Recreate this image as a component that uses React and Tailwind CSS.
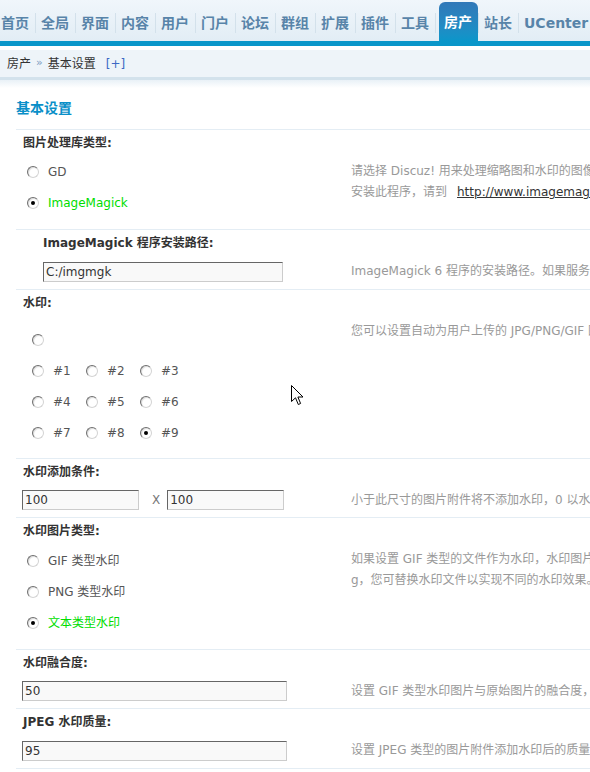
import React from 'react';

const tabs = ['首页', '全局', '界面', '内容', '用户', '门户', '论坛', '群组', '扩展', '插件', '工具', '房产', '站长', 'UCenter'];

const Radio = ({ checked }) => (
  <span className="w-[12px] h-[12px] shrink-0 rounded-full border border-t-[#6f6f6f] border-l-[#6f6f6f] border-r-[#d4d4d4] border-b-[#d4d4d4] bg-white shadow-[inset_1px_1px_1px_rgba(0,0,0,0.15)] flex items-center justify-center">
    {checked && <span className="w-[4px] h-[4px] rounded-full bg-black" />}
  </span>
);

const Option = ({ label, checked }) => (
  <li className="h-[22px] mb-[9px] flex items-center gap-[9px]">
    <Radio checked={checked} />
    <span className={checked ? 'text-[#00dd00]' : 'text-[#555]'}>{label}</span>
  </li>
);

const Input = ({ value, className }) => (
  <input
    readOnly
    value={value}
    className={`h-[20px] border border-t-[#666] border-l-[#666] border-r-[#ccc] border-b-[#ccc] bg-[#f9f9f9] px-[2px] text-[12px] text-[#333] outline-none ${className}`}
  />
);

const Title = ({ children, sub }) => (
  <div className={`h-[26px] border-t border-[#e4edf4] flex items-center font-bold text-[#333] ${sub ? 'pl-[27px]' : 'pl-[7px]'}`}>
    {children}
  </div>
);

const Row = ({ left, children }) => (
  <div className="flex">
    <div className="w-[335px] shrink-0">{left}</div>
    <div className="pt-[6px] leading-[21px] text-[#999] whitespace-nowrap">{children}</div>
  </div>
);

export default function App() {
  return (
    <div className="relative w-[590px] h-[772px] overflow-hidden bg-white text-[12px] font-['DejaVu_Sans','Noto_Sans_CJK_SC',sans-serif]">
      {/* top menu */}
      <div className="h-[41px] bg-linear-to-b from-[#f0f6fb] to-[#e2edf5] flex items-end">
        <div className="flex items-end ml-[-4px]">
          {tabs.map((t) => {
            const active = t === '房产';
            return (
              <React.Fragment key={t}>
                <div
                  className={`h-[39px] pl-[5px] pr-[6px] flex items-center font-bold text-[14px] whitespace-nowrap ${
                    active
                      ? 'ml-[3px] pt-[1px] rounded-t-[6px] bg-linear-to-b from-[#3178b8] to-[#0a96ca] text-white'
                      : 'pt-[3px] text-[#5884a9]'
                  } ${t === 'UCenter' ? 'text-[12px]' : ''}`}
                >
                  {t}
                </div>
                <span className="w-px h-[20px] mb-[8px] bg-[#d3e1eb]" />
              </React.Fragment>
            );
          })}
        </div>
      </div>
      <div className="h-[5px] bg-[#0a96c9]" />
      <div className="h-[4px] bg-white" />

      {/* breadcrumb */}
      <div className="h-[27px] bg-[#eef4f9] flex items-center pl-[7px] text-[#333]">
        <span>房产</span>
        <span className="mx-[5px] text-[#7d9cc2] text-[11px]">»</span>
        <span>基本设置</span>
        <span className="ml-[10px] text-[#3d68c4]">[+]</span>
      </div>
      <div className="h-[3px] bg-[#d3e2ec]" />
      <div className="h-[8px] bg-linear-to-b from-[#e9f1f7] to-white" />

      <div className="ml-[16px]">
        <div className="h-[41px] flex items-end pb-[11px]">
          <h3 className="leading-[20px] text-[14px] font-bold text-[#0a8fc8]">基本设置</h3>
        </div>

        <Title>图片处理库类型:</Title>
        <Row
          left={
            <ul className="pl-[11px] pt-[6px] pb-[6px]">
              <Option label="GD" />
              <Option label="ImageMagick" checked />
            </ul>
          }
        >
          <div>请选择 Discuz! 用来处理缩略图和水印的图像处理库，GD 是最广泛的处理库但是使用的系统资源较多，ImageMagick 速度快系统资源占用少，但需要服务器有执行命令行命令的权限。如果您的服务器有条件</div>
          <div>
            安装此程序，请到<span className="ml-[10px] text-[#333] underline">http://www.imagemagick.org</span> 下载，安装后在下面指定安装的路径
          </div>
        </Row>

        <Title sub>ImageMagick 程序安装路径:</Title>
        <Row
          left={
            <div className="pl-[27px] pt-[7px] pb-[7px]">
              <Input value="C:/imgmgk" className="w-[240px]" />
            </div>
          }
        >
          ImageMagick 6 程序的安装路径。如果服务器的操作系统为 Windows，路径不要使用长文件名
        </Row>

        <Title>水印:</Title>
        <Row
          left={
            <div className="pl-[16px] pt-[14px] pb-[5px]">
              <ul>
                <Option label="" />
              </ul>
              {[['#1', '#2', '#3'], ['#4', '#5', '#6'], ['#7', '#8', '#9']].map((r) => (
                <ul key={r[0]} className="flex">
                  {r.map((n) => (
                    <li key={n} className="w-[54px] h-[22px] mb-[9px] flex items-center gap-[9px]">
                      <Radio checked={n === '#9'} />
                      <span className="text-[#555]">{n}</span>
                    </li>
                  ))}
                </ul>
              ))}
            </div>
          }
        >
          您可以设置自动为用户上传的 JPG/PNG/GIF 图片附件添加水印，请在此选择水印添加的位置(3x3 共 9 个位置可选)。不支持动画 GIF 格式
        </Row>

        <Title>水印添加条件:</Title>
        <Row
          left={
            <div className="pl-[6px] pt-[6px] pb-[7px] flex items-center">
              <Input value="100" className="w-[117px]" />
              <span className="ml-[13px] mr-[7px] text-[#777]">X</span>
              <Input value="100" className="w-[117px]" />
            </div>
          }
        >
          小于此尺寸的图片附件将不添加水印，0 以水印图片的尺寸为准
        </Row>

        <Title>水印图片类型:</Title>
        <Row
          left={
            <ul className="pl-[11px] pt-[7px] pb-[6px]">
              <Option label="GIF 类型水印" />
              <Option label="PNG 类型水印" />
              <Option label="文本类型水印" checked />
            </ul>
          }
        >
          <div>如果设置 GIF 类型的文件作为水印，水印图片为 static/image/common/watermark.gif，如果设置 PNG 类型的文件作为水印，水印图片为 static/image/common/watermark.pn</div>
          <div>g，您可替换水印文件以实现不同的水印效果。如果设置文本类型水印并使用 TrueType 字体</div>
        </Row>

        <Title>水印融合度:</Title>
        <Row
          left={
            <div className="pl-[6px] pt-[6px] pb-[7px]">
              <Input value="50" className="w-[265px]" />
            </div>
          }
        >
          设置 GIF 类型水印图片与原始图片的融合度，范围为 1～100 的整数，数值越大水印图片透明度越低
        </Row>

        <Title>JPEG 水印质量:</Title>
        <Row
          left={
            <div className="pl-[6px] pt-[7px] pb-[7px]">
              <Input value="95" className="w-[265px]" />
            </div>
          }
        >
          设置 JPEG 类型的图片附件添加水印后的质量参数，范围为 0～100 的整数，数值越大结果图片效果越好
        </Row>
        <div className="border-t border-[#e4edf4]" />
      </div>

      {/* mouse pointer */}
      <svg className="absolute left-[291px] top-[385px]" width="13" height="21" viewBox="0 0 13 21">
        <path d="M0.5 0.5 L0.5 16.5 L4.5 12.8 L7.3 19.5 L9.6 18.5 L6.9 12 L12 12 Z" fill="white" stroke="black" strokeWidth="1" />
      </svg>
    </div>
  );
}
